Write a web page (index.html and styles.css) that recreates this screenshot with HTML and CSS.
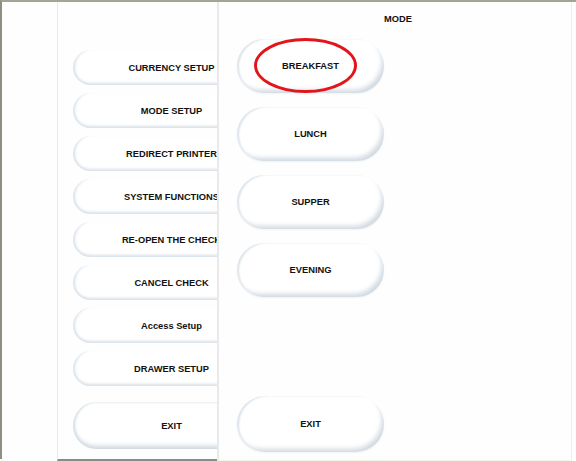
FILE: index.html
```html
<!DOCTYPE html>
<html>
<head>
<meta charset="utf-8">
<link rel="stylesheet" href="styles.css">
</head>
<body>
<div class="frame">
  <div class="gutter"></div>
  <div class="menu">
    <div class="menu-list">
      <div class="pill">CURRENCY SETUP</div>
      <div class="pill">MODE SETUP</div>
      <div class="pill">REDIRECT PRINTER</div>
      <div class="pill">SYSTEM FUNCTIONS</div>
      <div class="pill">RE-OPEN THE CHECK</div>
      <div class="pill">CANCEL CHECK</div>
      <div class="pill">Access Setup</div>
      <div class="pill">DRAWER SETUP</div>
    </div>
    <div class="pill pill-exit">EXIT</div>
  </div>
  <div class="mode">
    <div class="mode-title">MODE</div>
    <div class="mode-list">
      <div class="btn selected">BREAKFAST<span class="ring"></span></div>
      <div class="btn">LUNCH</div>
      <div class="btn">SUPPER</div>
      <div class="btn">EVENING</div>
    </div>
    <div class="btn btn-exit">EXIT</div>
  </div>
  <div class="edge"></div>
</div>
</body>
</html>
```

FILE: styles.css
```css
html, body {
  margin: 0;
  padding: 0;
  background: #fefefe;
}
body {
  width: 576px;
  height: 461px;
  overflow: hidden;
  font-family: "Liberation Sans", Arial, sans-serif;
  font-weight: bold;
  font-size: 9.3px;
  color: #111;
}
.frame {
  display: flex;
  height: 459px;
  border-top: 2px solid #a4a494;
  border-left: 2px solid #8e8e82;
  box-sizing: border-box;
  background: #fefefe;
}
.gutter {
  width: 55px;
  flex: none;
}
.menu {
  width: 160px;
  flex: none;
  border-left: 1px solid #e4e9ed;
  border-bottom: 2px solid #8a8a86;
  overflow: hidden;
  display: flex;
  flex-direction: column;
  box-sizing: border-box;
  height: 459px;
  padding-top: 48px;
}
.menu-list {
  display: flex;
  flex-direction: column;
  gap: 8px;
}
.pill {
  width: 197px;
  height: 35px;
  margin-left: 15px;
  flex: none;
  display: flex;
  align-items: center;
  justify-content: center;
  border-radius: 18px;
  background: #fff;
  box-shadow:
    inset 4px 0 3px -2px #d9e2e9,
    inset 0 -4px 3px -2px #d9e1e8,
    inset 0 1px 1px -1px #f0f3f5;
  white-space: nowrap;
}
.pill-exit {
  height: 47px;
  border-radius: 24px;
  margin-top: 16px;
  box-shadow:
    inset 4px 0 3px -2px #d4dde5,
    inset 0 -6px 5px -3px #cdd6df,
    inset 0 2px 2px -1px #e8edf1;
}
.mode {
  flex: 1;
  border-left: 2px solid #e9e9e9;
  border-right: 1px solid #eeeeee;
  border-bottom: 1px solid #f3f3e6;
  display: flex;
  flex-direction: column;
  padding-left: 18px;
  box-sizing: border-box;
  height: 459px;
}
.mode-title {
  text-align: center;
  margin-left: -12px;
  padding-top: 12px;
  height: 12px;
  line-height: 11px;
}
.mode-list {
  margin-top: 13px;
  display: flex;
  flex-direction: column;
  gap: 14px;
}
.btn {
  position: relative;
  width: 147px;
  height: 54px;
  flex: none;
  display: flex;
  align-items: center;
  justify-content: center;
  border-radius: 27px;
  background: #fff;
  box-shadow:
    inset 3px 1px 2px -1px #dbe3ea,
    inset -4px -5px 5px -2px #d0d9e1,
    0 1px 2px #f0f2f4;
}
.btn-exit {
  height: 56px;
  margin-top: auto;
  margin-bottom: 8px;
  border-radius: 28px;
}
.ring {
  position: absolute;
  left: 17px;
  top: -1px;
  width: 103px;
  height: 55px;
  box-sizing: border-box;
  border: 3px solid #e3141a;
  border-radius: 50%;
}
.edge {
  width: 4px;
  flex: none;
}
```
